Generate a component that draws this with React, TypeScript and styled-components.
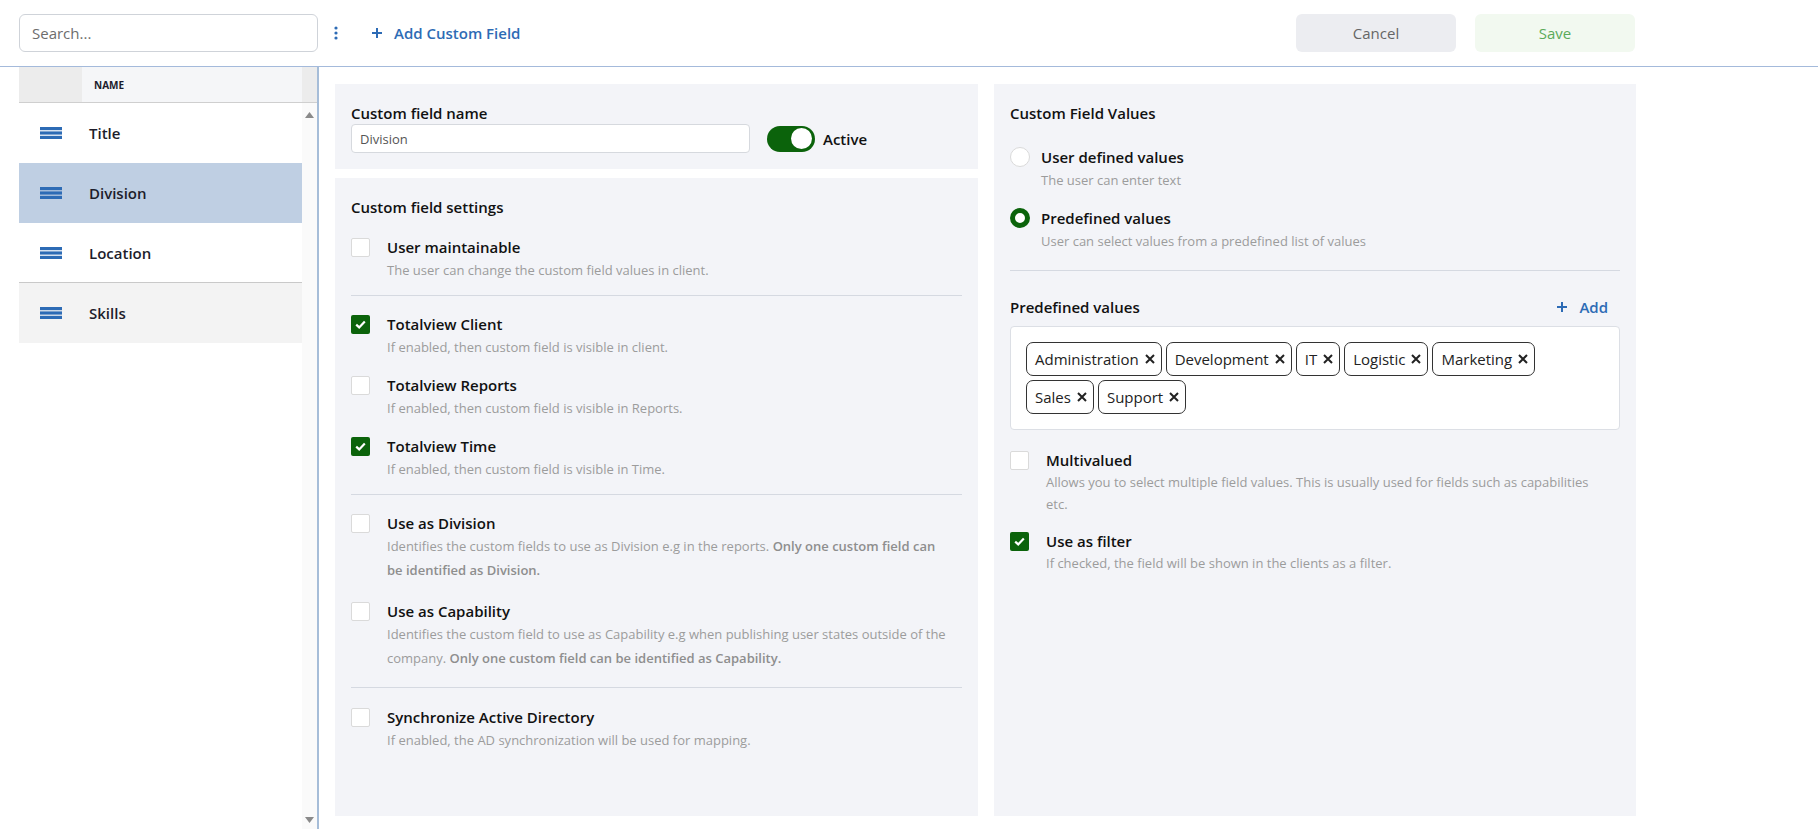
import styled, { createGlobalStyle } from "styled-components";

const GlobalStyle = createGlobalStyle`
  html, body {
    margin: 0;
    padding: 0;
    background: #fff;
  }
  body {
    font-family: "Open Sans", "Noto Sans", Arial, sans-serif;
    color: #111;
  }
  * {
    box-sizing: border-box;
  }
`;

const GREEN = "#0b630b";
const BLUE = "#2d6bb5";

const Page = styled.div`
  width: 1818px;
  height: 829px;
  display: flex;
  flex-direction: column;
  overflow: hidden;
`;

const Toolbar = styled.header`
  flex: none;
  height: 67px;
  display: flex;
  align-items: center;
  padding: 0 183px 0 19px;
  border-bottom: 1px solid #a4badb;
`;

const SearchInput = styled.input`
  width: 299px;
  height: 38px;
  border: 1px solid #cfd3d9;
  border-radius: 6px;
  padding: 0 12px;
  font: 15px "Open Sans", sans-serif;
  color: #333;
  outline: none;

  &::placeholder {
    color: #6d6d6d;
  }
`;

const KebabButton = styled.button`
  margin-left: 16px;
  padding: 0;
  border: 0;
  background: none;
  display: flex;
  align-items: center;
`;

const AddButton = styled.button`
  margin-left: 34px;
  padding: 0;
  border: 0;
  background: none;
  display: flex;
  align-items: center;
  gap: 12px;
  font: 600 15px "Open Sans", sans-serif;
  color: ${BLUE};
`;

const Actions = styled.div`
  margin-left: auto;
  display: flex;
  gap: 19px;
`;

const ActionButton = styled.button<{ $variant: "cancel" | "save" }>`
  width: 160px;
  height: 38px;
  border: 0;
  border-radius: 6px;
  font: 15px "Open Sans", sans-serif;
  background: ${(p) => (p.$variant === "cancel" ? "#ecedf1" : "#f2f9f0")};
  color: ${(p) => (p.$variant === "cancel" ? "#666" : "#5aab5a")};
`;

const Body = styled.div`
  flex: 1;
  min-height: 0;
  display: flex;
`;

const Sidebar = styled.aside`
  flex: none;
  width: 319px;
  padding-left: 19px;
  border-right: 2px solid #a6bdd8;
  display: flex;
  flex-direction: column;
`;

const ListHeader = styled.div`
  flex: none;
  height: 36px;
  display: grid;
  grid-template-columns: 63px 1fr 15px;
  border-bottom: 1px solid #cfcfcf;
`;

const HeadCell = styled.div<{ $bg: string }>`
  background: ${(p) => p.$bg};
  display: flex;
  align-items: center;
  padding-left: 12px;
  font: 700 10px "Open Sans", sans-serif;
  color: #1c1c2c;
`;

const ListArea = styled.div`
  flex: 1;
  min-height: 0;
  display: flex;
`;

const Rows = styled.div`
  flex: 1;
  display: flex;
  flex-direction: column;
`;

const Row = styled.div<{ $bg?: string; $bordered?: boolean }>`
  height: 60px;
  display: flex;
  align-items: center;
  background: ${(p) => p.$bg || "#fff"};
  border-bottom: ${(p) => (p.$bordered ? "1px solid #c9c9c9" : "0")};
`;

const RowIcon = styled.div`
  width: 63px;
  display: flex;
  justify-content: center;
`;

const RowName = styled.span`
  padding-left: 7px;
  font: 600 15px "Open Sans", sans-serif;
  color: #1d1d2b;
`;

const Scrollbar = styled.div`
  flex: none;
  width: 15px;
  background: #fafafa;
  display: flex;
  flex-direction: column;
  justify-content: space-between;
  align-items: center;
  padding: 9px 0 6px;
`;

const Main = styled.main`
  flex: 1;
  padding: 17px 0 13px 16px;
  display: grid;
  grid-template-columns: 643px 642px;
  gap: 16px;
`;

const Column = styled.div`
  display: flex;
  flex-direction: column;
  gap: 9px;
`;

const Card = styled.section<{ $grow?: boolean }>`
  background: #f3f4f8;
  padding: 19px 16px 16px;
  ${(p) => (p.$grow ? "flex: 1;" : "")}
`;

const Heading = styled.h3<{ $mb?: number }>`
  margin: 0 0 ${(p) => p.$mb ?? 0}px;
  font: 600 15px/20px "Open Sans", sans-serif;
  color: #111;
`;

const NameRow = styled.div`
  margin-top: 1px;
  display: flex;
  align-items: center;
`;

const NameInput = styled.input`
  width: 399px;
  height: 29px;
  border: 1px solid #d6d9de;
  border-radius: 4px;
  padding: 0 8px;
  font: 13px "Open Sans", sans-serif;
  color: #555;
  background: #fff;
  outline: none;
`;

const Toggle = styled.div`
  margin-left: 17px;
  width: 48px;
  height: 26px;
  border-radius: 13px;
  background: ${GREEN};
  display: flex;
  align-items: center;
  justify-content: flex-end;
  padding: 0 3px;
`;

const Knob = styled.span`
  width: 21px;
  height: 21px;
  border-radius: 50%;
  background: #fff;
`;

const ToggleLabel = styled.span`
  margin-left: 8px;
  font: 600 15px "Open Sans", sans-serif;
`;

const OptionList = styled.div<{ $gap?: number; $mt?: number }>`
  display: flex;
  flex-direction: column;
  gap: ${(p) => p.$gap ?? 15}px;
  margin-top: ${(p) => p.$mt ?? 0}px;
`;

const Option = styled.div<{ $gap: number }>`
  display: grid;
  grid-template-columns: auto 1fr;
  column-gap: ${(p) => p.$gap}px;
  align-items: center;
`;

const OptionLabel = styled.div`
  font: 600 15px/22px "Open Sans", sans-serif;
  color: #111;
`;

const OptionDesc = styled.div<{ $lh: number }>`
  grid-column: 2;
  font: 13px/${(p) => p.$lh}px "Open Sans", sans-serif;
  color: #9c9c9c;

  b {
    font-weight: 600;
    color: #8e8e8e;
  }
`;

const CheckBox = styled.span<{ $checked?: boolean }>`
  width: 19px;
  height: 19px;
  border-radius: 2px;
  background: ${(p) => (p.$checked ? GREEN : "#fff")};
  border: ${(p) => (p.$checked ? "0" : "1px solid #dadada")};
  display: flex;
  align-items: center;
  justify-content: center;
`;

const Radio = styled.span<{ $checked?: boolean }>`
  width: 20px;
  height: 20px;
  border-radius: 50%;
  background: #fff;
  border: ${(p) => (p.$checked ? `5.5px solid ${GREEN}` : "1px solid #dadada")};
`;

const Divider = styled.hr<{ $mt: number; $mb: number }>`
  margin: ${(p) => p.$mt}px 0 ${(p) => p.$mb}px;
  border: 0;
  height: 1px;
  background: #d5d9e1;
`;

const ValuesHeader = styled.div`
  display: flex;
  justify-content: space-between;
  align-items: center;
  height: 22px;
`;

const SmallAdd = styled(AddButton)`
  margin: 0;
  padding-right: 12px;
  gap: 12px;
`;

const TagBox = styled.div`
  margin-top: 8px;
  background: #fff;
  border: 1px solid #dcdfe5;
  border-radius: 4px;
  padding: 15px 16px 15px 15px;
  display: flex;
  flex-wrap: wrap;
  gap: 4px 4px;
`;

const Tag = styled.span`
  height: 34px;
  border: 1px solid #333;
  border-radius: 7px;
  padding: 0 6px 0 8px;
  display: inline-flex;
  align-items: center;
  gap: 6px;
  font: 15px "Open Sans", sans-serif;
  color: #222;
`;

const Hamburger = () => (
  <svg width="22" height="12" viewBox="0 0 22 12">
    <rect x="0" y="0" width="22" height="3.2" fill={BLUE} />
    <rect x="0" y="4.4" width="22" height="3.2" fill={BLUE} />
    <rect x="0" y="8.8" width="22" height="3.2" fill={BLUE} />
  </svg>
);

const Kebab = () => (
  <svg width="4" height="14" viewBox="0 0 4 14">
    <circle cx="2" cy="2" r="1.6" fill={BLUE} />
    <circle cx="2" cy="7" r="1.6" fill={BLUE} />
    <circle cx="2" cy="12" r="1.6" fill={BLUE} />
  </svg>
);

const PlusIcon = () => (
  <svg width="10" height="10" viewBox="0 0 10 10">
    <rect x="4" y="0" width="2" height="10" fill={BLUE} />
    <rect x="0" y="4" width="10" height="2" fill={BLUE} />
  </svg>
);

const CheckMark = () => (
  <svg width="11" height="9" viewBox="0 0 11 9">
    <path d="M1.2 4.6 L4.2 7.4 L9.8 1.4" fill="none" stroke="#fff" strokeWidth="2.2" />
  </svg>
);

const CloseX = () => (
  <svg width="10" height="10" viewBox="0 0 10 10">
    <path d="M1 1 L9 9 M9 1 L1 9" stroke="#222" strokeWidth="2" />
  </svg>
);

const Arrow = ({ up }: { up?: boolean }) => (
  <svg width="9" height="6" viewBox="0 0 9 6">
    <path d={up ? "M0 6 L4.5 0 L9 6 Z" : "M0 0 L4.5 6 L9 0 Z"} fill="#8a8a8a" />
  </svg>
);

type SettingProps = {
  label: string;
  checked?: boolean;
  children: React.ReactNode;
  lh?: number;
};

const Setting = ({ label, checked, children, lh = 24 }: SettingProps) => (
  <Option $gap={17}>
    <CheckBox $checked={checked}>{checked && <CheckMark />}</CheckBox>
    <OptionLabel>{label}</OptionLabel>
    <OptionDesc $lh={lh}>{children}</OptionDesc>
  </Option>
);

const fields = [
  { name: "Title" },
  { name: "Division", bg: "#bfcfe3" },
  { name: "Location", bordered: true },
  { name: "Skills", bg: "#f3f3f3" },
];

const tags = ["Administration", "Development", "IT", "Logistic", "Marketing", "Sales", "Support"];

const App = () => {
  return (
    <Page>
      <GlobalStyle />
      <Toolbar>
        <SearchInput placeholder="Search..." />
        <KebabButton>
          <Kebab />
        </KebabButton>
        <AddButton>
          <PlusIcon />
          Add Custom Field
        </AddButton>
        <Actions>
          <ActionButton $variant="cancel">Cancel</ActionButton>
          <ActionButton $variant="save">Save</ActionButton>
        </Actions>
      </Toolbar>

      <Body>
        <Sidebar>
          <ListHeader>
            <HeadCell $bg="#ececec" />
            <HeadCell $bg="#f5f6f8">NAME</HeadCell>
            <HeadCell $bg="#ececec" />
          </ListHeader>
          <ListArea>
            <Rows>
              {fields.map((f) => (
                <Row key={f.name} $bg={f.bg} $bordered={f.bordered}>
                  <RowIcon>
                    <Hamburger />
                  </RowIcon>
                  <RowName>{f.name}</RowName>
                </Row>
              ))}
            </Rows>
            <Scrollbar>
              <Arrow up />
              <Arrow />
            </Scrollbar>
          </ListArea>
        </Sidebar>

        <Main>
          <Column>
            <Card>
              <Heading>Custom field name</Heading>
              <NameRow>
                <NameInput defaultValue="Division" />
                <Toggle>
                  <Knob />
                </Toggle>
                <ToggleLabel>Active</ToggleLabel>
              </NameRow>
            </Card>

            <Card $grow>
              <Heading $mb={19}>Custom field settings</Heading>
              <Setting label="User maintainable">
                The user can change the custom field values in client.
              </Setting>
              <Divider $mt={13} $mb={17} />
              <OptionList>
                <Setting label="Totalview Client" checked>
                  If enabled, then custom field is visible in client.
                </Setting>
                <Setting label="Totalview Reports">
                  If enabled, then custom field is visible in Reports.
                </Setting>
                <Setting label="Totalview Time" checked>
                  If enabled, then custom field is visible in Time.
                </Setting>
              </OptionList>
              <Divider $mt={13} $mb={17} />
              <OptionList $gap={18}>
                <Setting label="Use as Division">
                  Identifies the custom fields to use as Division e.g in the reports.{" "}
                  <b>Only one custom field can</b>
                  <br />
                  <b>be identified as Division.</b>
                </Setting>
                <Setting label="Use as Capability">
                  Identifies the custom field to use as Capability e.g when publishing user states outside of the
                  <br />
                  company. <b>Only one custom field can be identified as Capability.</b>
                </Setting>
              </OptionList>
              <Divider $mt={17} $mb={18} />
              <Setting label="Synchronize Active Directory">
                If enabled, the AD synchronization will be used for mapping.
              </Setting>
            </Card>
          </Column>

          <Column>
            <Card $grow>
              <Heading $mb={23}>Custom Field Values</Heading>
              <OptionList>
                <Option $gap={11}>
                  <Radio />
                  <OptionLabel>User defined values</OptionLabel>
                  <OptionDesc $lh={24}>The user can enter text</OptionDesc>
                </Option>
                <Option $gap={11}>
                  <Radio $checked />
                  <OptionLabel>Predefined values</OptionLabel>
                  <OptionDesc $lh={24}>User can select values from a predefined list of values</OptionDesc>
                </Option>
              </OptionList>
              <Divider $mt={17} $mb={25} />
              <ValuesHeader>
                <Heading>Predefined values</Heading>
                <SmallAdd>
                  <PlusIcon />
                  Add
                </SmallAdd>
              </ValuesHeader>
              <TagBox>
                {tags.map((t) => (
                  <Tag key={t}>
                    {t}
                    <CloseX />
                  </Tag>
                ))}
              </TagBox>
              <OptionList $mt={19}>
                <Setting label="Multivalued" lh={22}>
                  Allows you to select multiple field values. This is usually used for fields such as capabilities
                  <br />
                  etc.
                </Setting>
                <Setting label="Use as filter" checked lh={22}>
                  If checked, the field will be shown in the clients as a filter.
                </Setting>
              </OptionList>
            </Card>
          </Column>
        </Main>
      </Body>
    </Page>
  );
};

export default App;
